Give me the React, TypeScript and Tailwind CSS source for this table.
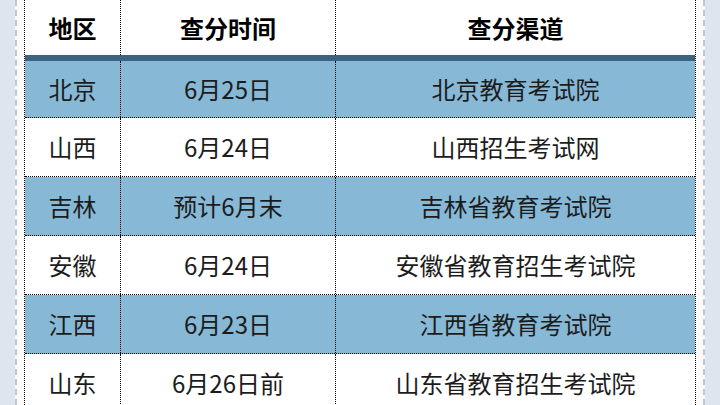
const rows = [
  { region: "北京", time: "6月25日", channel: "北京教育考试院", blue: true },
  { region: "山西", time: "6月24日", channel: "山西招生考试网", blue: false },
  { region: "吉林", time: "预计6月末", channel: "吉林省教育考试院", blue: true },
  { region: "安徽", time: "6月24日", channel: "安徽省教育招生考试院", blue: false },
  { region: "江西", time: "6月23日", channel: "江西省教育考试院", blue: true },
  { region: "山东", time: "6月26日前", channel: "山东省教育招生考试院", blue: false },
];

function Side({ right }: { right?: boolean }) {
  return (
    <div className={right ? "flex h-full shrink-0 flex-row-reverse" : "flex h-full shrink-0"}>
      <div className="h-full w-[15px] bg-[#dde5ef]" />
      <div className="h-full w-[2px] border-l-2 border-dashed border-[#bcc7d6] bg-[#fbfaf8]" />
      <div className="h-full w-[7px] bg-[#fbfaf8]" />
    </div>
  );
}

export default function App() {
  return (
    <div
      className="flex h-[405px] w-[720px] overflow-hidden bg-[#dde5ef] text-[24px] leading-none text-[#1c1c1c]"
      style={{ fontFamily: '"Noto Sans CJK SC", "Noto Sans", sans-serif' }}
    >
      <Side />
      <div className="flex h-full w-[672px] shrink-0 flex-col border-x border-dotted border-black bg-white">
        <div className="grid h-[55px] shrink-0 grid-cols-[95px_1px_214px_1px_359px] font-bold text-black">
          <div className="flex items-center justify-center">地区</div>
          <div className="border-l border-dotted border-black" />
          <div className="flex items-center justify-center">查分时间</div>
          <div className="border-l border-dotted border-black" />
          <div className="flex items-center justify-center">查分渠道</div>
        </div>
        <div className="h-[6px] shrink-0 bg-[#3a6384]" />
        {rows.map((r, i) => (
          <div
            key={r.region}
            className={
              (i === 0 ? "h-[57px] " : "h-[59px] ") +
              "grid shrink-0 grid-cols-[95px_1px_214px_1px_359px] border-b border-dotted border-black " +
              (r.blue ? "bg-[#87b9d7]" : "bg-white")
            }
          >
            <div className="flex items-center justify-center">{r.region}</div>
            <div className="border-l border-dotted border-black" />
            <div className="flex items-center justify-center">{r.time}</div>
            <div className="border-l border-dotted border-black" />
            <div className="flex items-center justify-center">{r.channel}</div>
          </div>
        ))}
      </div>
      <Side right />
    </div>
  );
}
